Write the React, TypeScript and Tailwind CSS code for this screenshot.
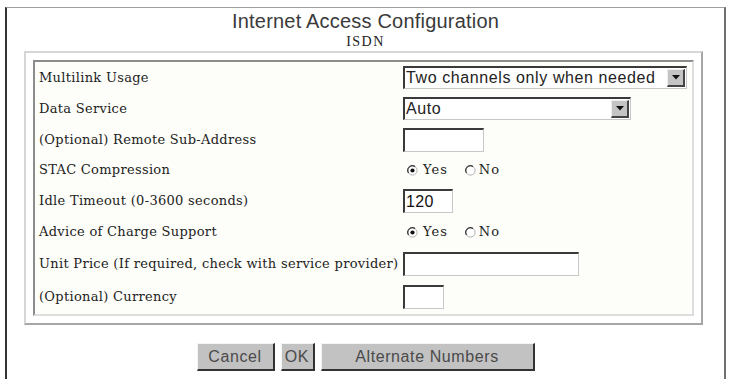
import React from 'react';

const serif = { fontFamily: '"DejaVu Serif", "Liberation Serif", serif' };
const sans = { fontFamily: '"Liberation Sans", Arial, sans-serif' };

function Radio({ checked }: { checked?: boolean }) {
  return (
    <svg width="11" height="11" viewBox="0 0 11 11" className="shrink-0">
      <circle cx="5.5" cy="5.5" r="4.6" fill="#fff" stroke="#b0b0b0" strokeWidth="1" />
      <path d="M1.6 8 A4.6 4.6 0 0 1 8 1.6" fill="none" stroke="#404040" strokeWidth="1.3" />
      {checked && <circle cx="5.5" cy="5.5" r="2.1" fill="#111" />}
    </svg>
  );
}

function YesNo({ yes }: { yes: boolean }) {
  return (
    <div className="flex items-center pl-[4px] text-[13px] text-[#222] tracking-[1px]" style={serif}>
      <Radio checked={yes} />
      <span className="ml-[5px]">Yes</span>
      <span className="ml-[17px]"><Radio checked={!yes} /></span>
      <span className="ml-[3px]">No</span>
    </div>
  );
}

function TextBox({ width, value }: { width: string; value?: string }) {
  return (
    <div
      className={`${width} h-[24px] bg-white border-t-2 border-l-2 border-b border-r border-t-[#3a3a3a] border-l-[#3a3a3a] border-b-[#c8c8c8] border-r-[#c8c8c8] flex items-center pl-[1px] text-[16px] text-[#111] tracking-[0.4px]`}
      style={sans}
    >
      {value}
    </div>
  );
}

function Select({ width, value }: { width: string; value: string }) {
  return (
    <div
      className={`${width} h-[23px] bg-white border-t-2 border-l-2 border-b border-r border-t-[#3a3a3a] border-l-[#3a3a3a] border-b-[#c8c8c8] border-r-[#c8c8c8] flex items-center justify-between`}
    >
      <span className="pl-[1px] text-[16px] text-[#222] tracking-[0.6px] leading-none" style={sans}>
        {value}
      </span>
      <div className="w-[18px] h-[18px] mr-[1px] bg-[#c4c4c4] border-t border-l border-b-2 border-r-2 border-t-[#eee] border-l-[#eee] border-b-[#444] border-r-[#444] flex items-center justify-center">
        <svg width="8" height="5" viewBox="0 0 8 5">
          <path d="M0 0 H8 L4 4.5 Z" fill="#111" />
        </svg>
      </div>
    </div>
  );
}

const rows: { label: string; h: string; control: React.ReactNode }[] = [
  { label: 'Multilink Usage', h: 'h-[31px]', control: <Select width="w-[284px]" value="Two channels only when needed" /> },
  { label: 'Data Service', h: 'h-[31px]', control: <Select width="w-[228px]" value="Auto" /> },
  { label: '(Optional) Remote Sub-Address', h: 'h-[31px]', control: <TextBox width="w-[81px]" /> },
  { label: 'STAC Compression', h: 'h-[30px]', control: <YesNo yes /> },
  { label: 'Idle Timeout (0-3600 seconds)', h: 'h-[32px]', control: <TextBox width="w-[50px]" value="120" /> },
  { label: 'Advice of Charge Support', h: 'h-[30px]', control: <YesNo yes /> },
  { label: 'Unit Price (If required, check with service provider)', h: 'h-[33px]', control: <TextBox width="w-[176px]" /> },
  { label: '(Optional) Currency', h: 'h-[34px]', control: <TextBox width="w-[41px]" /> },
];

function Btn({ width, children }: { width: string; children: React.ReactNode }) {
  return (
    <button
      className={`${width} h-[28px] bg-[#c2c2c2] border-t border-l border-b-2 border-r-2 border-t-[#f4f4f4] border-l-[#f4f4f4] border-b-[#333] border-r-[#333] text-[16px] text-[#4a4a4a] tracking-[0.6px] flex items-center justify-center`}
      style={sans}
    >
      {children}
    </button>
  );
}

export default function App() {
  return (
    <div className="min-h-screen bg-white pt-[7px] pl-[5px]">
      <div className="w-[721px] h-[372px] border-l-2 border-t border-r-2 border-l-[#333] border-t-[#a0a0a0] border-r-[#707070]">
        {/* Header */}
        <div className="pt-[1px] text-center">
          <div className="text-[20px] leading-[24px] text-[#3a3a3a] tracking-[0.2px]" style={sans}>
            Internet Access Configuration
          </div>
          <div className="mt-[2px] text-[14px] leading-[14px] text-[#222] tracking-[1.5px]" style={{ fontFamily: '"Liberation Serif", serif' }}>
            ISDN
          </div>
        </div>

        {/* Settings panel */}
        <div className="ml-[17px] mt-[2px] w-[679px] p-[7px] border-2 border-t-[#d6d6d6] border-l-[#d6d6d6] border-b-[#a6a6a6] border-r-[#a6a6a6]">
          <div className="bg-[#fdfdf9] border-2 border-t-[#8c8c8c] border-l-[#8c8c8c] border-b-[#dedede] border-r-[#dedede]">
            {rows.map((r) => (
              <div key={r.label} className={`flex items-center ${r.h}`}>
                <div className="w-[368px] shrink-0 pl-[4px] text-[13px] text-[#222] tracking-[0.3px] whitespace-nowrap" style={serif}>
                  {r.label}
                </div>
                {r.control}
              </div>
            ))}
          </div>
        </div>

        {/* Buttons */}
        <div className="mt-[18px] flex justify-center gap-[6px]">
          <Btn width="w-[78px]">Cancel</Btn>
          <Btn width="w-[34px]">OK</Btn>
          <Btn width="w-[214px]">Alternate Numbers</Btn>
        </div>
      </div>
    </div>
  );
}
